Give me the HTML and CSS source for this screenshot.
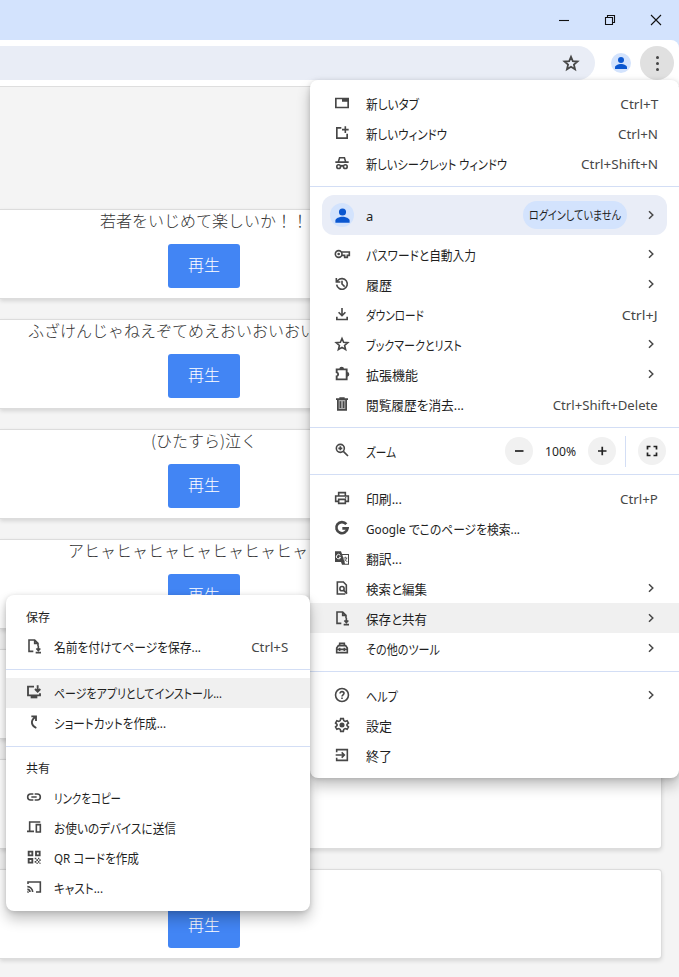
FILE: index.html
```html
<!DOCTYPE html>
<html lang="ja">
<head>
<meta charset="utf-8">
<title>ブラウザ メニュー</title>
<link rel="stylesheet" href="styles.css">
</head>
<body>
<header class="titlebar">
  <svg class="win" viewBox="0 0 12 12"><path d="M1 6.500h10"/></svg>
  <svg class="win" viewBox="0 0 12 12"><path d="M1.500 3.500h7v7h-7zM3.500 3.500v-2h7v7h-2"/></svg>
  <svg class="win" viewBox="0 0 12 12"><path d="M1 1l10 10M11 1L1 11"/></svg>
</header>
<div class="toolbar">
  <div class="omnibox"><svg class="star" viewBox="0 0 24 24"><use href="#i-star"/></svg></div>
  <div class="avatar"><svg viewBox="0 0 24 24"><use href="#i-person"/></svg></div>
  <div class="more"><i></i><i></i><i></i></div>
</div>
<main class="page">
  <section class="card"><div class="inner"><p>若者をいじめて楽しいか！！</p><button>再生</button></div></section>
  <section class="card"><div class="inner"><p>ふざけんじゃねえぞてめえおいおいおいおいおい</p><button>再生</button></div></section>
  <section class="card"><div class="inner"><p>(ひたすら)泣く</p><button>再生</button></div></section>
  <section class="card"><div class="inner"><p>アヒャヒャヒャヒャヒャヒャヒャヒャ</p><button>再生</button></div></section>
  <section class="card"></section>
  <section class="card"></section>
  <section class="card"><div class="inner"><p></p><button>再生</button></div></section>
</main>

<nav class="menu main-menu">
  <div class="group first">
    <div class="row"><svg viewBox="0 0 24 24"><path d="M1.500 4h21v16h-21zM4 6.500v11h16V10h-8V6.500z" fill-rule="evenodd"/></svg><span class="label" data-w="53">新しいタブ</span><span class="key" data-w="38">Ctrl+T</span></div>
    <div class="row"><svg viewBox="0 0 24 24"><path d="M11 3H3v18h18v-8h-2.500v5.500h-13v-13H11zM15.800 2h2.400v3.800H22v2.400h-3.800V12h-2.400V8.200H12V5.800h3.800z"/></svg><span class="label" data-w="81">新しいウィンドウ</span><span class="key" data-w="40">Ctrl+N</span></div>
    <div class="row"><svg viewBox="0 0 24 24"><path d="M7.500 3h9l2 6.500H22V12H2V9.500h3.500zM9.300 5.300L8 9.500h8l-1.300-4.200z" fill-rule="evenodd"/><path class="line" d="M10 17c1-1 3-1 4 0"/><circle class="line" cx="7" cy="17.500" r="2.800"/><circle class="line" cx="17" cy="17.500" r="2.800"/></svg><span class="label" data-w="141">新しいシークレット ウィンドウ</span><span class="key" data-w="77">Ctrl+Shift+N</span></div>
  </div>
  <hr>
  <div class="profile">
    <div class="avatar"><svg viewBox="0 0 24 24"><use href="#i-person"/></svg></div>
    <span class="name">a</span><span class="chip"><span class="label" data-w="92">ログインしていません</span></span><svg class="chev" viewBox="0 0 10 10"><use href="#i-chev"/></svg>
  </div>
  <div class="group second">
    <div class="row"><svg viewBox="0 0 24 24"><circle class="line" cx="7" cy="12" r="5"/><circle cx="7" cy="12" r="2"/><path class="line" d="M12 9h11v5h-3v3h-4v-3h-4"/></svg><span class="label" data-w="110">パスワードと自動入力</span><svg class="chev" viewBox="0 0 10 10"><use href="#i-chev"/></svg></div>
    <div class="row"><svg viewBox="0 0 24 24"><path class="line" d="M4 13a8 8 0 1 0 2-6.500L4 8.500M3.500 3v6h6M12 7v5l4 4"/></svg><span class="label" data-w="26">履歴</span><svg class="chev" viewBox="0 0 10 10"><use href="#i-chev"/></svg></div>
    <div class="row"><svg viewBox="0 0 24 24"><path d="M10.800 3h2.400v8.500l3-3L18 10.200l-6 6-6-6 1.800-1.700 3 3zM3 16h2.500v3h13v-3H21v5.500H3z"/></svg><span class="label" data-w="58">ダウンロード</span><span class="key" data-w="36">Ctrl+J</span></div>
    <div class="row"><svg viewBox="0 0 24 24"><use href="#i-star"/></svg><span class="label" data-w="96">ブックマークとリスト</span><svg class="chev" viewBox="0 0 10 10"><use href="#i-chev"/></svg></div>
    <div class="row"><svg viewBox="0 0 24 24"><path class="line thick" d="M4 5h15v15H4v-4.500c3-.5 3-5.500 0-6z"/><path d="M8 4.500a3.500 3.500 0 0 1 7 0zM19.500 9a3.500 3.500 0 0 1 0 7z"/></svg><span class="label" data-w="52">拡張機能</span><svg class="chev" viewBox="0 0 10 10"><use href="#i-chev"/></svg></div>
    <div class="row"><svg viewBox="0 0 24 24"><path d="M3 3.500h5V2h8v1.500h5V6h-1.500v16h-15V6H3zM7 6v13.500h10V6zm1.500 2h2.300v10H8.500zm4.700 0h2.300v10h-2.300z" fill-rule="evenodd"/><path opacity=".45" d="M6 6h12v14H6z"/></svg><span class="label" data-w="98">閲覧履歴を消去...</span><span class="key" data-w="105">Ctrl+Shift+Delete</span></div>
  </div>
  <hr>
  <div class="zoom">
    <svg class="icon" viewBox="0 0 24 24"><circle class="line" cx="9.500" cy="9.500" r="6"/><path class="line" d="M14 14L21 21M6.500 9.500h6M9.500 6.500v6"/></svg><span class="label" data-w="30">ズーム</span>
    <div class="round"><svg viewBox="0 0 12 12"><path d="M2 6h8.500"/></svg></div><span class="pct" data-w="31">100%</span><div class="round"><svg viewBox="0 0 12 12"><path d="M2 6h8.500M6.250 1.800v8.500"/></svg></div>
    <div class="full"><div class="round"><svg viewBox="0 0 12 12"><path d="M1.500 4.500v-3h3M7.500 1.500h3v3M10.500 7.500v3h-3M4.500 10.500h-3v-3"/></svg></div></div>
  </div>
  <hr>
  <div class="group third">
    <div class="row"><svg viewBox="0 0 24 24"><path class="line" d="M7 8V4h10v4M7 17H2.500V9h19v8H17M7 14h10v6H7z"/><circle cx="17.500" cy="11.700" r="1.100"/></svg><span class="label" data-w="36">印刷...</span><span class="key" data-w="38">Ctrl+P</span></div>
    <div class="row"><svg viewBox="0 0 24 24"><path class="line g" d="M18.500 6.200A8.400 8.400 0 1 0 20.300 12.500H12.500"/></svg><span class="label" data-w="154">Google でこのページを検索...</span></div>
    <div class="row"><svg viewBox="0 0 24 24"><path d="M1.500 2h9l1.500 4h10.500v16H12l-1.500-4h-9zM12.600 7.500L16.500 20.500H21v-13z" fill-rule="evenodd"/><path class="cut" d="M9.500 8A3.300 3.300 0 1 0 10 11H7.500"/><path class="line thin" d="M14 12h6M17 10v2M19 12c-1 3-2 4-4 5M16 14l4 4"/></svg><span class="label" data-w="36">翻訳...</span></div>
    <div class="row"><svg viewBox="0 0 24 24"><path class="line" d="M18.500 20V7.500l-4.500-4.500H5v18h12"/><circle class="line" cx="12" cy="13" r="3.200"/><path class="line" d="M14.500 15.500L19.500 20.500"/></svg><span class="label" data-w="61">検索と編集</span><svg class="chev" viewBox="0 0 10 10"><use href="#i-chev"/></svg></div>
    <div class="row active"><svg viewBox="0 0 24 24"><use href="#i-save"/></svg><span class="label" data-w="61">保存と共有</span><svg class="chev" viewBox="0 0 10 10"><use href="#i-chev"/></svg></div>
    <div class="row"><svg viewBox="0 0 24 24"><path class="line" d="M8.500 8V5h7v3M4 19v-7l2.500-3.500h11L20 12v7zM4 14h16M8.500 11.500v5M15.500 11.500v5"/></svg><span class="label" data-w="74">その他のツール</span><svg class="chev" viewBox="0 0 10 10"><use href="#i-chev"/></svg></div>
  </div>
  <hr>
  <div class="group last">
    <div class="row"><svg viewBox="0 0 24 24"><circle class="line" cx="12" cy="12" r="9.700"/><path class="line" d="M9 9.800c0-4 6-3.500 6-.3 0 2.200-3 2.300-3 4.800M12 15.800v2.200"/></svg><span class="label" data-w="32">ヘルプ</span><svg class="chev" viewBox="0 0 10 10"><use href="#i-chev"/></svg></div>
    <div class="row"><svg viewBox="0 0 24 24"><path class="line" d="M10 2.500h4l.6 2.900 2.200 1.300 2.900-1 2 3.400-2.200 2v1.800l2.200 2-2 3.400-2.900-1-2.200 1.300-.6 2.900h-4l-.6-2.900-2.200-1.300-2.900 1-2-3.400 2.200-2v-1.800l-2.200-2 2-3.400 2.900 1 2.200-1.300z"/><circle cx="12" cy="12" r="3.800"/></svg><span class="label" data-w="26">設定</span></div>
    <div class="row"><svg viewBox="0 0 24 24"><path class="line" d="M4 8V4h16v16H4v-4M2.500 12H15M11.500 8l4 4-4 4"/></svg><span class="label" data-w="26">終了</span></div>
  </div>
</nav>

<nav class="menu sub-menu">
  <h2 class="cap">保存</h2>
  <div class="row"><svg viewBox="0 0 24 24"><use href="#i-save"/></svg><span class="label" data-w="147">名前を付けてページを保存...</span><span class="key" data-w="37">Ctrl+S</span></div>
  <hr>
  <div class="row active"><svg viewBox="0 0 24 24"><path class="line thick" d="M12 4H3v13h18v-3M17.500 2v9M13.500 7.500l4 4 4-4"/><path d="M7 17h10v4.500H7z"/></svg><span class="label" data-w="168">ページをアプリとしてインストール...</span></div>
  <div class="row"><svg viewBox="0 0 24 24"><path class="line thick" d="M15.500 21C8 18 6 10 14 4.500M8 3.500h7v7"/></svg><span class="label" data-w="112">ショートカットを作成...</span></div>
  <hr>
  <h2 class="cap share">共有</h2>
  <div class="row"><svg viewBox="0 0 24 24"><path class="line" d="M11 7.500H7a4.500 4.500 0 0 0 0 9h4M13 7.500h4a4.500 4.500 0 0 1 0 9h-4M8 12h8"/></svg><span class="label" data-w="67">リンクをコピー</span></div>
  <div class="row"><svg viewBox="0 0 24 24"><path class="line" d="M21.500 4.500H5.500v13M1.500 18.500H12M15.500 8.500h6v11h-6z"/></svg><span class="label" data-w="122">お使いのデバイスに送信</span></div>
  <div class="row"><svg viewBox="0 0 24 24"><path class="line thick" d="M4 4h5.500v5.500H4zM15 4h5.500v5.500H15zM4 15h5.500v5.500H4z"/><path d="M13 13h2.500v2.500H13zM18 13h2v2.500h-2zM15.500 15.500H18V18h-2.500zM20 15.500h2V18h-2zM13 18h2.500v2.500H13zM18 18h2v2.500h-2zM15.500 20.500H18v1.500h-2.500zM20 20.500h2V22h-2z"/></svg><span class="label" data-w="85">QR コードを作成</span></div>
  <div class="row"><svg viewBox="0 0 24 24"><path class="line" d="M3 7.500v-3h18.500v15H15M2 11.500c4.500 0 8 3.500 8 8M2 15.500c2.500 0 4 1.500 4 4"/><path d="M2 18q2.500 0 2.500 2.500H2z"/></svg><span class="label" data-w="49">キャスト...</span></div>
</nav>

<svg class="defs">
  <symbol id="i-star" viewBox="0 0 24 24"><path class="line" d="M12 3.800l2.400 5.700 6.300.5-4.800 4.200 1.500 6.100-5.400-3.300-5.400 3.300 1.500-6.100L3.300 10l6.300-.5z"/></symbol>
  <symbol id="i-person" viewBox="0 0 24 24"><circle cx="12" cy="7.500" r="4.500"/><path d="M3 21v-2.500c0-3 5-5 9-5s9 2 9 5V21z"/></symbol>
  <symbol id="i-chev" viewBox="0 0 10 10"><path d="M3 1.200L6.800 5 3 8.800"/></symbol>
  <symbol id="i-save" viewBox="0 0 24 24"><path class="line" d="M11 20H4.500V3H13l5 5v4M13 3v5h5M18.500 12v6.500M15.500 15.800l3 3 3-3M14.500 22h8"/></symbol>
</svg>
<script src="fit.js"></script>
</body>
</html>
```
FILE: styles.css
```css
* { box-sizing: border-box; }
body { margin: 0; height: 977px; overflow: hidden; background: #d3e3fd; font-family: "Noto Sans CJK JP", sans-serif; position: relative; }
.defs { position: absolute; width: 0; height: 0; }
.titlebar { height: 40px; display: flex; justify-content: flex-end; align-items: center; gap: 34px; padding-right: 17px; }
.win { width: 12px; height: 12px; fill: none; stroke: #111; stroke-width: 1.1; }
.toolbar { height: 46px; background: #fff; border-radius: 0 8px 0 0; display: flex; align-items: center; padding-right: 5px; }
.omnibox { flex: 1; height: 34px; margin-right: 16px; background: #e9edf6; border-radius: 0 17px 17px 0; display: flex; align-items: center; justify-content: flex-end; padding-right: 15px; }
.star { width: 18px; height: 18px; }
.avatar { width: 20px; height: 20px; border-radius: 50%; background: #d3e3fd; display: flex; align-items: center; justify-content: center; }
.avatar svg { width: 16px; height: 16px; fill: #0b57d0; }
.more { width: 34px; height: 34px; margin-left: 9px; border-radius: 50%; background: #e0e0e0; display: flex; flex-direction: column; align-items: center; justify-content: center; gap: 3px; }
.more i { width: 3px; height: 3px; border-radius: 50%; background: #444; }
.line { fill: none; stroke: #474747; stroke-width: 2.4; }
.thick { stroke-width: 2.8; }
.thin { stroke-width: 1.2; }
.g { stroke-width: 4; }
.cut { fill: none; stroke: #fff; stroke-width: 1.5; }

.page { height: 891px; background: #f4f4f4; border-top: 1px solid #dedede; padding: 122px 17px 0 0; display: flex; flex-direction: column; gap: 20px; }
.card { height: 90px; flex: none; background: #fff; border: 1px solid #dcdcdc; border-left: 0; border-radius: 0 4px 4px 0; box-shadow: 0 2px 4px rgba(0,0,0,.13); }
.inner { width: 408px; display: flex; flex-direction: column; align-items: center; }
.inner p { margin: 0; height: 34px; line-height: 21px; font-size: 16px; font-weight: 300; color: #333; white-space: nowrap; }
.inner button { width: 72px; height: 44px; padding: 0 0 5px; border: 0; border-radius: 3px; background: #4285f4; color: #fff; font: 300 16px "Noto Sans CJK JP", sans-serif; }

.menu { position: absolute; background: #fff; font: 13px "Noto Sans", "Noto Sans CJK JP", sans-serif; color: #1f1f1f; box-shadow: 0 8px 14px rgba(0,0,0,.24), 0 1px 5px rgba(0,0,0,.15); }
.main-menu { left: 310px; top: 80px; width: 369px; height: 698px; border-radius: 8px; }
.sub-menu { left: 6px; top: 595px; width: 304px; height: 316px; border-radius: 8px; padding-top: 11px; }
.menu hr { margin: 0; border: 0; height: 1px; background: #d3def5; }
.row { height: 30px; display: flex; align-items: center; padding: 0 21px 0 24px; }
.row > svg:first-child, .zoom .icon { width: 16px; height: 16px; flex: none; margin-right: 16px; fill: #474747; overflow: visible; position: relative; top: -1px; }
.label, .key, .pct { white-space: nowrap; transform-origin: left center; font-feature-settings: "palt"; flex: none; line-height: 20px; }
.key { margin-left: auto; color: #474747; transform-origin: right center; }
.chev { width: 10px; height: 10px; margin-left: auto; margin-right: 2px; fill: none; stroke: #474747; stroke-width: 1.5; flex: none; position: relative; top: -1px; }
.active { background: #f0f0f0; }
.first { padding: 9px 0 7px; }
.profile { height: 40px; margin: 8px 12px 5px; padding: 0 8px; border-radius: 12px; background: #e9edf7; display: flex; align-items: center; }
.profile .avatar { width: 24px; height: 24px; }
.profile .avatar svg { width: 19px; height: 19px; }
.name { margin-left: 12px; padding-top: 2px; }
.chip { width: 104px; height: 28px; margin-left: auto; padding: 2px 0 0 6px; border-radius: 14px; background: #d3e3fd; display: flex; align-items: center; font-size: 12px; }
.profile .chev { margin-left: 19px; margin-right: 3px; top: 0; }
.second { padding-bottom: 7px; }
.zoom { height: 46px; display: flex; align-items: center; padding: 0 13px 0 24px; }
.zoom .label { padding-top: 1px; }
.round { width: 28px; height: 28px; border-radius: 50%; background: #f1f1f1; display: flex; align-items: center; justify-content: center; }
.round svg { width: 12px; height: 12px; fill: none; stroke: #222; stroke-width: 1.7; }
.zoom > .round:nth-of-type(1) { margin-left: auto; }
.pct { width: 31px; margin: 0 12px; }
.full { height: 31px; margin-left: 9px; padding-left: 12px; border-left: 1px solid #d3def5; display: flex; align-items: center; }
.third { padding: 8px 0; }
.third .row { padding-top: 2px; }
.last { padding-top: 9px; }
.cap { margin: 0; height: 26px; padding-left: 20px; font-size: 12px; font-weight: 400; line-height: 23px; }
.share { height: 28px; line-height: 27px; }
.sub-menu .row { padding: 0 22px 0 20px; }
.sub-menu .row > svg:first-child { margin-right: 12px; }
.sub-menu hr { margin: 7px 0 8px; }
.sub-menu .row + .row + hr { margin-top: 8px; }
```
FILE: fit.js
```js
// Condenses each label horizontally to the width given in data-w.
document.querySelectorAll('[data-w]').forEach(function (el) {
  var range = document.createRange();
  range.selectNodeContents(el);
  var natural = range.getBoundingClientRect().width;
  el.style.transform = 'scaleX(' + (el.dataset.w / natural) + ')';
});
```
